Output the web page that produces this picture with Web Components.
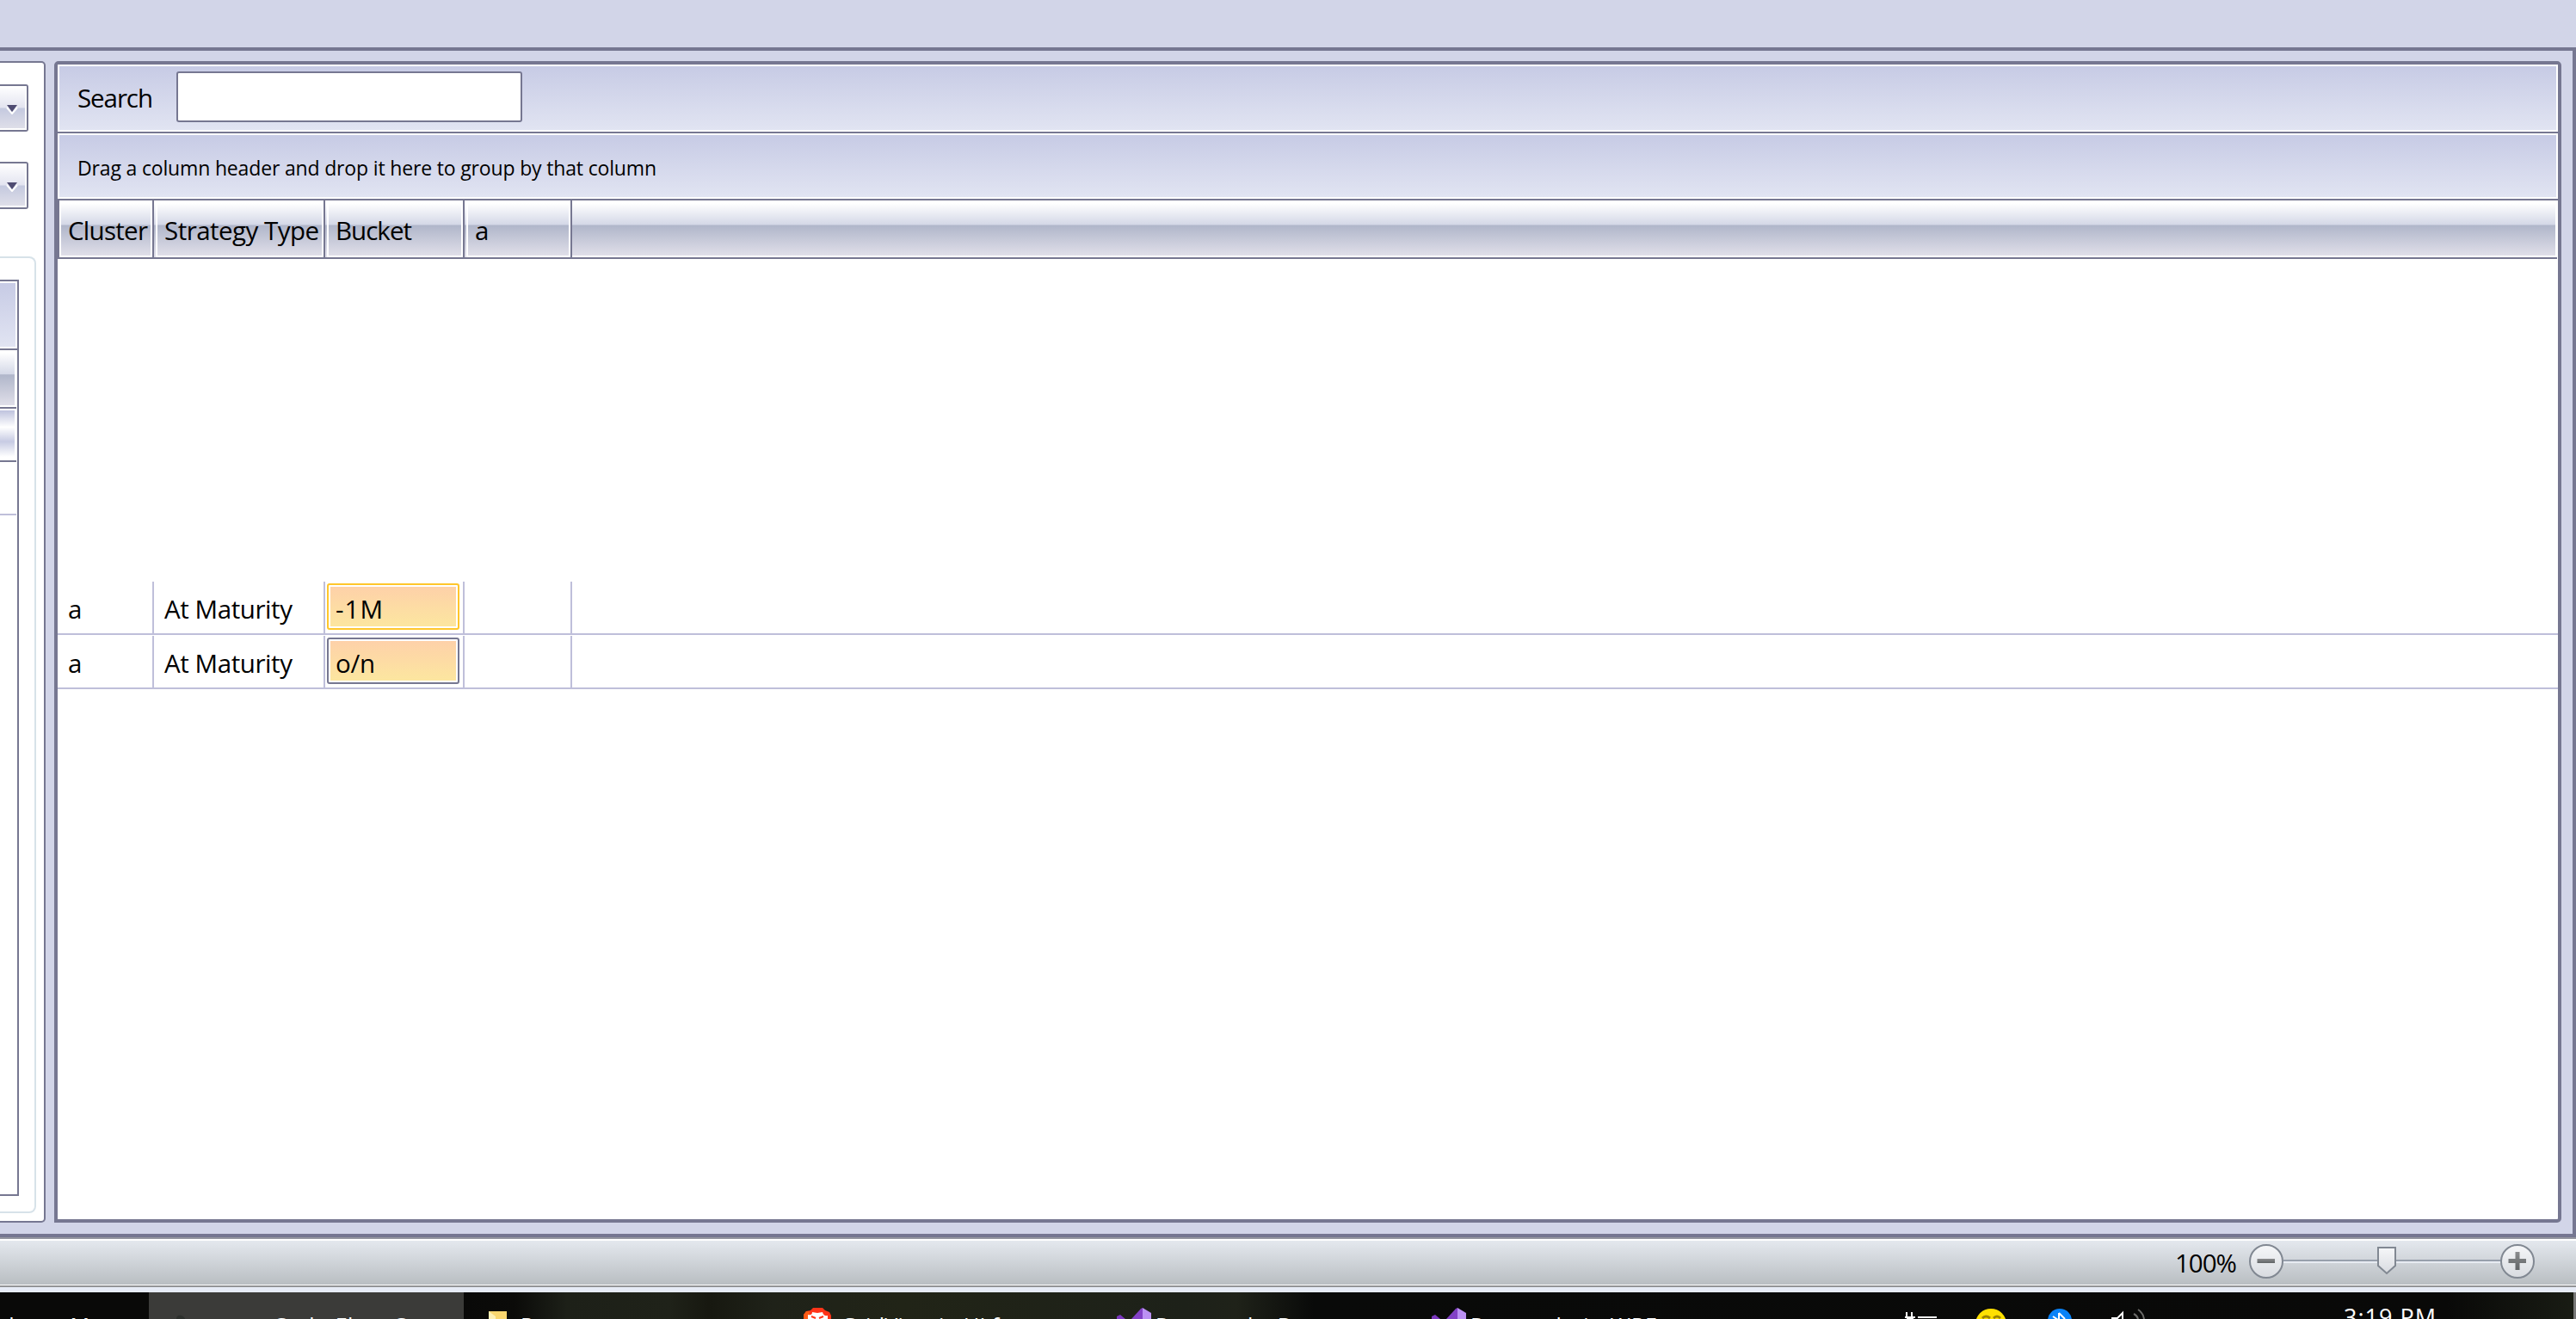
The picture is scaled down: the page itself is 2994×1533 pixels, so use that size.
<!DOCTYPE html>
<html lang="en"><head><meta charset="utf-8"><title>Strategy grid</title>
<style>
html,body{margin:0;padding:0;height:1533px;overflow:hidden;background:#d2d5e8}
body{font-family:"Open Sans","Noto Sans",sans-serif;font-size:29.5px;color:#000}
</style></head><body><app-shell></app-shell>
<script>
const def=(name,html,init)=>customElements.define(name,class extends HTMLElement{
  constructor(){super();this.attachShadow({mode:'open'}).innerHTML='<style>*{box-sizing:border-box}:host{box-sizing:border-box;display:block}</style>'+html;}
  connectedCallback(){if(init)init.call(this,this.shadowRoot);}
});

/* Label whose advance width is tuned with letter spacing. */
def('fit-text','<style>:host{display:block;white-space:pre;flex:none;line-height:40px}span{display:inline-block}</style><span><slot></slot></span>',function(r){
  const s=r.querySelector('span'),w=+this.getAttribute('w'),n=this.textContent.length;
  if(w&&n>1)s.style.letterSpacing=((w-s.getBoundingClientRect().width)/(n-1))+'px';
});

def('drop-button',`<style>:host{width:33px;height:55px;border:2px solid #767791;border-left:0;border-radius:0 3px 3px 0;padding:2px 2px 2px 0;background:#fff}
div{height:100%;background:linear-gradient(#fdfdfe,#e3e4f0 49%,#c4c9df 51%,#dfdfe9);display:flex;justify-content:flex-end;padding-right:8px;align-items:center}svg{margin-top:3px}</style>
<div><svg width="14" height="12" viewBox="0 0 14 12"><path d="M1 4 7 11 13 4" fill="none" stroke="#fff" stroke-width="2"/><path d="M1 1H13L7 9Z" fill="#4f4c72"/></svg></div>`);

def('side-panel',`<style>:host{width:53px;height:1350px;background:#fff;border:2px solid #767791;border-left:0;border-radius:0 5px 5px 0;padding-top:25px}
.c{display:flex;flex-direction:column;gap:35px}
.g{margin-top:55px;width:42px;height:1112px;border:2px solid #d7e2e9;border-left:0;border-radius:0 8px 8px 0;padding-top:25px}
.t{width:22px;height:1065px;border:2px solid #767791;border-left:0}
.a{height:80px;border-bottom:2px solid #767791;padding:2px 2px 2px 0}.a i{display:block;height:74px;background:linear-gradient(#c7cbe5,#e1e4f2)}
.h{width:19px;height:68px;border-bottom:2px solid #767791;padding:3px 2px 2px 0}.h i{display:block;height:61px;background:linear-gradient(#fff,#d4d8e7 41%,#b0b6ca 42%,#e0dfe9)}
.n{width:19px;height:62px;border-bottom:2px solid #767791;padding:2px 2px 4px 0}.n i{display:block;height:54px;background:linear-gradient(#bfc3de,#fff 36%,#c7cbe3 67%,#fff)}
.l{width:19px;height:62px;border-bottom:2px solid #bfbfda}</style>
<div class="c"><drop-button></drop-button><drop-button></drop-button></div>
<div class="g"><div class="t"><div class="a"><i></i></div><div class="h"><i></i></div><div class="n"><i></i></div><div class="l"></div></div></div>`);

def('tool-band',`<style>:host{border:2px solid #fff;display:flex;background:linear-gradient(#c7cbe5,#e1e4f2);padding-left:21px}</style><slot></slot>`);

def('grid-header',`<style>:host{display:flex;height:66px;flex:none;padding-left:2px;background:#fff;border-left:0}
::slotted(*){flex:none}</style><slot></slot>`);

def('head-cell',`<style>:host{height:66px;width:var(--w);border-right:2px solid #767791;background:linear-gradient(#fff 3px,#d4d8e7 28px,#b0b6ca 29px,#e0dfe9 64px);display:flex}
div{flex:1;border:2px solid #fff;border-top-width:3px;margin-left:var(--m,2px);padding-left:var(--p,8px);padding-top:12px}
:host([last]){border-right:0}:host([last]) div{border-left:0;border-right-width:3px}</style><div><slot></slot></div>`);

def('grid-row',`<style>:host{display:flex;height:63px;border-bottom:2px solid #bfbfda;padding-top:1px}</style><slot></slot>`);
def('grid-cell',`<style>:host{width:var(--w);height:60px;flex:none;border-right:2px solid #bfbfda;padding:12px 0 0 var(--p,12px)}
:host([hot]){padding:2px 4px 4px 2px}
div{height:100%}
:host([hot]) div{border:2px solid var(--b);border-radius:3px;background:linear-gradient(#fed0a9,#fce79f) padding-box;box-shadow:inset 0 0 0 2px #fff;padding:8px 0 0 8px}</style><div><slot></slot></div>`);

def('strategy-grid',`<style>:host{width:2914px;height:1350px;border:4px solid #767791;border-radius:5px 5px 5px 0;background:#fff;display:flex;flex-direction:column}
.s{height:78px;flex:none}.line{height:2px;background:#767791;flex:none}.d{height:76px;flex:none;font-size:23px}
.box{width:402px;height:59px;border:2px solid #767791;border-radius:3px;background:#fff;margin:6px 0 0 28px}
.left{border-left:2px solid #767791;padding-left:0}
.body{padding-top:374px}</style>
<tool-band class="s"><fit-text w="88" style="margin-top:17px">Search</fit-text><div class="box"></div></tool-band><div class="line"></div>
<tool-band class="d"><fit-text w="673" style="margin-top:18px">Drag a column header and drop it here to group by that column</fit-text></tool-band><div class="line"></div>
<grid-header class="left"><head-cell style="--w:110px;--m:0px"><fit-text w="93">Cluster</fit-text></head-cell><head-cell style="--w:199px"><fit-text w="180">Strategy Type</fit-text></head-cell><head-cell style="--w:162px"><fit-text w="89">Bucket</fit-text></head-cell><head-cell style="--w:125px"><fit-text>a</fit-text></head-cell><head-cell last style="--w:2308px;--m:0px"></head-cell></grid-header><div class="line" style="margin-right:1px"></div>
<div class="body">
<grid-row><grid-cell style="--w:112px"><fit-text>a</fit-text></grid-cell><grid-cell style="--w:199px"><fit-text w="149">At Maturity</fit-text></grid-cell><grid-cell hot style="--w:162px;--b:#ffc62c"><fit-text w="55">-1M</fit-text></grid-cell><grid-cell style="--w:125px"></grid-cell></grid-row>
<grid-row><grid-cell style="--w:112px"><fit-text>a</fit-text></grid-cell><grid-cell style="--w:199px"><fit-text w="149">At Maturity</fit-text></grid-cell><grid-cell hot style="--w:162px;--b:#767791"><fit-text w="46">o/n</fit-text></grid-cell><grid-cell style="--w:125px"></grid-cell></grid-row>
</div>`);

def('zoom-slider',`<style>:host{width:420px;height:42px}</style><svg width="336" height="42" viewBox="0 0 336 42"><defs><linearGradient id="g" x2="0" y2="1"><stop stop-color="#f6f7f9"/><stop offset="1" stop-color="#d8dbe0"/></linearGradient><linearGradient id="m" x2="0" y2="1"><stop stop-color="#8b8c8e"/><stop offset="1" stop-color="#606466"/></linearGradient></defs>
<path d="M40 19H293" stroke="#98a0ac" stroke-width="2"/><path d="M40 21H293" stroke="#e7ebf2" stroke-width="2"/>
<g fill="url(#g)" stroke="#818892" stroke-width="2"><circle cx="20" cy="20" r="19"/><circle cx="312" cy="20" r="19"/><path d="M150 4H170V25L160 34 150 25Z"/></g>
<rect x="9.500" y="17" width="20.500" height="5" fill="url(#m)"/><path d="M301.500 17H309.500V9H314.500V17H322V22H314.500V30H309.500V22H301.500Z" fill="url(#m)"/></svg>`);

def('status-bar',`<style>:host{height:64px;flex:none;border-top:2px solid #94969f;background:#e6ebf6;display:flex;flex-direction:column}
.b{height:54px;flex:none;border-top:2px solid #fff;border-bottom:1px solid #fff;background:linear-gradient(#e4e8ee,#b9bec2);display:flex;padding-left:2528px}
.e{height:2px;background:#939496}</style>
<div class="b"><fit-text w="72" style="margin-top:6px">100%</fit-text><zoom-slider style="margin:4px 0 0 15px"></zoom-slider></div><div class="e"></div>`);

/* Free-placed shortcuts along the clipped top strip of the taskbar. */
def('task-bar',`<style>:host{height:31px;flex:none;position:relative;overflow:hidden;color:#fff;font-size:25px;background:linear-gradient(90deg,#090908 0 18%,#0b0b09 20%,#1d2018 22%,#1f2219 26%,#171810 27.500%,#1f2219 30%,#212417 35%,#1d2119 46%,#1f2219 48%,#090a09 51%,#090908 95%,#191c14)}
.on{position:absolute;left:173px;width:366px;height:31px;background:#3b3b39}.end{position:absolute;right:0;width:3px;height:31px;background:#777}
fit-text{position:absolute;top:18px}svg{position:absolute;left:0;top:0}.clock{top:9px;font-size:27px}</style>
<div class="on"></div><div class="end"></div>
<fit-text style="left:-8px" w="112">telegram M</fit-text><fit-text style="left:317px" w="155">Code Flow C</fit-text><fit-text style="left:605px">P</fit-text><fit-text style="left:977px" w="210">GridView in UI for</fit-text><fit-text style="left:1343px" w="160">Research  D</fit-text><fit-text style="left:1709px" w="216">Research  in WPF</fit-text>
<svg width="2994" height="31" viewBox="0 1502 2994 31"><path d="M205 1533q0-5 6-4 4 2 4 4" fill="#2d302d"/><path d="M568 1524h21v9h-21z" fill="#fad66f"/><path d="m568 1524 8 6v3h-8z" fill="#fff0b5"/>
<path d="M934 1533v-5l3-4 5-1 3-3h11l3 3 5 2 2 4v4z" fill="#ff3418"/><path d="M934 1533v-5l3-4 4 0v9z" fill="#ff5c16"/><path d="M939 1533v-5q5 1 5-3l6 1 6-1q1 5 6 4v4z" fill="#fff"/><path d="m943 1530 5 2m9-2-5 2" stroke="#ff3418" stroke-width="2"/>
<g id="vs"><path d="m1298 1533v-3l4-2 6 5z" fill="#7a37bd"/><path d="m1315 1533 11-12 2-1v13z" fill="#8241c6"/><path d="m1328 1520 10 6v7h-10z" fill="#bb91f3"/></g><use href="#vs" x="366"/>
<path d="M2216 1525v6m6-6v6m-8 0h12M2229 1531h22" stroke="#fff" stroke-width="2" fill="none"/><path d="M2216 1530h8v3h-8z" fill="#fff"/>
<ellipse cx="2314" cy="1539" rx="18" ry="18" fill="#ffe000"/><path d="M2304 1532q4-4 9 0m4 0q4-4 8 0" stroke="#9b8300" stroke-width="3" fill="none"/>
<circle cx="2394" cy="1535" r="14" fill="#0982f7"/><path d="m2386 1530 12 8m-5-12v7m0-7 7 7" stroke="#fff" stroke-width="2" fill="none"/>
<path d="M2454 1532h7l6-6v7" fill="none" stroke="#fff" stroke-width="2"/><path d="m2480 1527q4 2 5 6m0-11q6 4 7 11" fill="none" stroke="#6b6b69" stroke-width="2"/></svg>
<fit-text class="clock" style="left:2724px" w="107">3:19 PM</fit-text>`);

def('app-shell',`<style>:host{width:2994px;height:1533px;display:flex;flex-direction:column;background:#d2d5e8}
.top{height:55px;flex:none}.w{height:1383px;flex:none;border:4px solid #767791;border-left:0;display:flex;padding-top:12px;gap:10px}</style>
<div class="top"></div><div class="w"><side-panel></side-panel><strategy-grid></strategy-grid></div><status-bar></status-bar><task-bar></task-bar>`);
</script></body></html>
